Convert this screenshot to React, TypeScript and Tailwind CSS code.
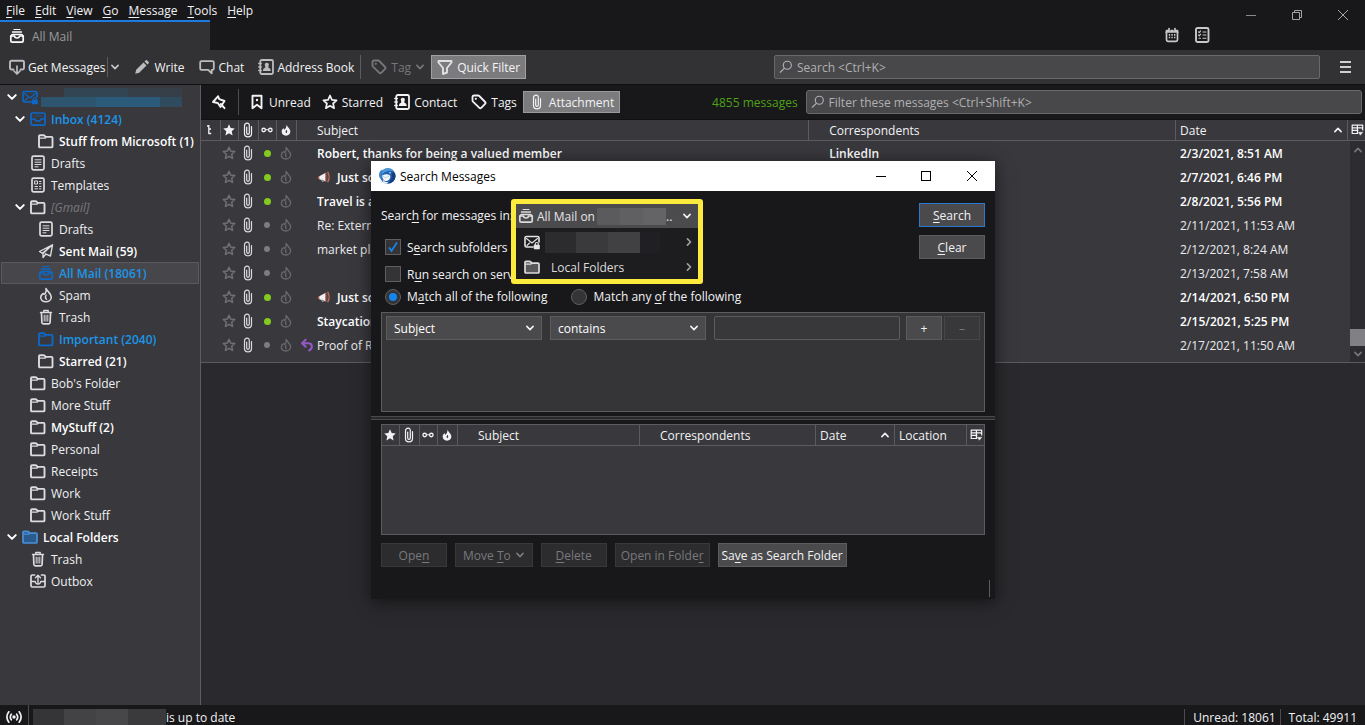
import React from "react";

type IconProps = { className?: string; size?: string };

function Svg({ className = "", children, size = "size-4" }: { className?: string; size?: string; children: React.ReactNode }) {
  return (
    <svg
      viewBox="0 0 16 16"
      fill="none"
      stroke="currentColor"
      strokeWidth="1.7"
      strokeLinecap="round"
      strokeLinejoin="round"
      aria-hidden="true"
      className={`${size} shrink-0 ${className}`}
    >
      {children}
    </svg>
  );
}

const Folder = ({ className }: IconProps) => (
  <Svg className={className}>
    <path d="M1 13.4V3.2q0-1 1-1h3.500q.6 0 1 .5l1 1.200h6q1 0 1 1v8.500q0 1-1 1H2q-1 0-1-1z" strokeWidth="1.900" />
    <path d="M2 5.200h5l1-1" strokeWidth="1.300" />
  </Svg>
);
const FilledFolder = ({ className, fill }: IconProps & { fill: string }) => (
  <Svg className={className}>
    <path d="M1 13V3.400q0-1 1-1h3.600q.6 0 1 .5l1 1.200H14q1 0 1 1V13q0 1-1 1H2q-1 0-1-1z" fill={fill} />
    <path d="M2 5.200h5l1-1" strokeWidth="1.200" />
  </Svg>
);
const Inbox = ({ className }: IconProps) => (
  <Svg className={className}>
    <rect x="1" y="2" width="14" height="12.200" rx="1.500" />
    <path d="M1.500 8H5q.4 2.200 3 2.200T11 8h3.500" strokeWidth="1.400" />
    <path d="M4 5h8" strokeWidth="1" opacity=".55" />
  </Svg>
);
const Account = ({ className, lock = "currentColor" }: IconProps & { lock?: string }) => (
  <Svg className={className}>
    <path d="M9 13H2.500q-1.500 0-1.500-1.500V4Q1 2.500 2.500 2.500h11Q15 2.500 15 4v4" strokeWidth="1.600" />
    <path d="M2.500 4.500 8 9l5.500-4.500M3 11.500l2.500-2.500" strokeWidth="1.100" />
    <rect x="10" y="11" width="5.600" height="4" rx=".6" fill={lock} stroke={lock} strokeWidth=".6" />
    <path d="M11.300 11v-1a1.500 1.500 0 0 1 3 0v1" strokeWidth="1.100" />
  </Svg>
);
const Doc = ({ className }: IconProps) => (
  <Svg className={className}>
    <rect x="2" y="1.200" width="12" height="13.600" rx="1.500" />
    <path d="M5 4.800h6M5 7.200h6M5 9.500h6M5 11.800h3" strokeWidth="1" />
  </Svg>
);
const Template = ({ className }: IconProps) => (
  <Svg className={className}>
    <rect x="2" y="1.200" width="12" height="13.600" rx="1.500" />
    <path d="M5 4h2.500v3H5zM9.500 4.500H11M9.500 6.700H11M5 9.500h2.500M5 11.800h2.500M9.500 9.500H11M9.500 11.800H11" strokeWidth="1" />
  </Svg>
);
const Sent = ({ className }: IconProps) => (
  <Svg className={className}>
    <path d="M14.500 1.800 1.500 8.500l3 1.800zM14.500 1.800 12.500 13l-5-2.200M14.500 1.800 5 10.500v4l2.500-3" strokeWidth="1.400" />
  </Svg>
);
const Archive = ({ className }: IconProps) => (
  <Svg className={className}>
    <path d="M5 1.500h6" strokeWidth="1.200" />
    <path d="M3.500 4h9" strokeWidth="1.300" />
    <path d="M1.800 8h3.700q.2 2 2.500 2t2.500-2h3.700v4.700q0 1.500-1.500 1.500H3.300q-1.500 0-1.500-1.500z" />
    <path d="m1.800 8 1.400-1.500h9.600L14.200 8" strokeWidth="1.400" />
  </Svg>
);
const Flame = ({ className, size }: IconProps) => (
  <Svg className={className} size={size}>
    <path
      d="M8 1.500q.8 2.800-.8 5-1 1.400-1.900 0Q2.700 8.300 2.700 10.300c0 2.600 2.200 4.500 5.200 4.500s5.400-2 5.400-4.800C13.300 6.800 9.800 5 8 1.500z"
      strokeWidth="1.600"
    />
    <path d="M8.500 12.200q-2-1.600-.4-4" strokeWidth="1.400" />
  </Svg>
);
const FlameSolid = ({ className, size }: IconProps) => (
  <Svg className={className} size={size}>
    <path
      fillRule="evenodd"
      d="M8.500.5c.5 3 5.300 5 5.300 9.500 0 3.200-2.400 5.500-5.800 5.500S2.200 13.200 2.200 10c0-2.200 1.300-3.800 2.700-4.800 0 1.200.2 2 .8 2.400C8 6 8.800 3.500 8.500.5zM9 7.500c-1.200 1.300-2.400 2.400-.6 4.700 1-.6 1.800-2 .6-4.700z"
      fill="currentColor"
      stroke="none"
    />
  </Svg>
);
const Trash = ({ className }: IconProps) => (
  <Svg className={className}>
    <path d="M2.500 3.500h11M5.800 3V1.500h4.400V3" strokeWidth="1.400" />
    <path d="m3.500 4.500.4 9q.1 1.300 1.400 1.300h5.400q1.300 0 1.400-1.300l.4-9" />
    <path d="M6.200 6.200v6M8 6.200v6M9.800 6.200v6" strokeWidth="1" />
  </Svg>
);
const Outbox = ({ className }: IconProps) => (
  <Svg className={className}>
    <path d="M4.500 2H2.300Q1 2 1 3.300v9.400Q1 14 2.300 14h11.400q1.300 0 1.300-1.300V3.300Q15 2 13.700 2h-2.200" />
    <path d="M8 9.500V2.500M5.500 4.800 8 2.300l2.500 2.500M1.500 8.500h3.700q.3 2.500 2.800 2.500t2.800-2.500h3.700" strokeWidth="1.400" />
  </Svg>
);
const Chevron = ({ className, size }: IconProps) => (
  <Svg className={className} size={size}>
    <path d="m3 5.500 5 5 5-5" strokeWidth="2.600" />
  </Svg>
);
const Star = ({ className, solid, size }: IconProps & { solid?: boolean }) => (
  <Svg className={className} size={size}>
    <path
      d="m8 1.500 1.900 4.300 4.700.5-3.500 3.200 1 4.700L8 11.800l-4.100 2.400 1-4.700L1.400 6.300l4.700-.5z"
      fill={solid ? "currentColor" : "none"}
      strokeWidth={solid ? "0" : "1.700"}
    />
  </Svg>
);
const Clip = ({ className }: IconProps) => (
  <Svg className={className}>
    <path d="M6.700 5v6q0 1.300 1.300 1.300T9.300 11V3.500Q9.300 1.200 7.300 1.200 4.500 1.200 4.500 4v7.500q0 3.300 3.500 3.300t3.500-3.300V4.500" strokeWidth="1.200" />
  </Svg>
);
const Glasses = ({ className }: IconProps) => (
  <Svg className={className} size="size-3.5">
    <circle cx="4.200" cy="8" r="2" strokeWidth="1.500" />
    <circle cx="11.800" cy="8" r="2" strokeWidth="1.500" />
    <path d="M6.500 7.800h3" strokeWidth="1.200" />
  </Svg>
);
const Thread = ({ className }: IconProps) => (
  <Svg className={className}>
    <path d="M5 4h2M6.800 3v8.500h2.400M7 7h2" strokeWidth="1.300" strokeLinecap="butt" />
  </Svg>
);
const Picker = ({ className }: IconProps) => (
  <Svg className={className} size="size-3.5">
    <path d="M8 12H2.500V2.500h12V8M3 5.500h11M3 8.500h6M8.500 2.500V12" strokeWidth="1.400" />
    <path d="M9.300 10.500h5.400L12 13.800z" fill="currentColor" strokeWidth=".4" />
  </Svg>
);
const Pin = ({ className }: IconProps) => (
  <Svg className={className}>
    <path d="M2 8 7.200 2.200l1 3L13.500 7l-4 6-2.700-4zM9.800 10l3.700 4.200" strokeWidth="1.900" />
  </Svg>
);
const Bookmark = ({ className }: IconProps) => (
  <Svg className={className}>
    <path d="M3.500 1.800h9v12.400L8 10.700l-4.500 3.500z" strokeWidth="1.900" />
    <circle cx="8" cy="6" r="1.200" fill="currentColor" stroke="none" />
  </Svg>
);
const Contact = ({ className }: IconProps) => (
  <Svg className={className}>
    <rect x="2.300" y="1" width="12.700" height="14" rx="1.500" strokeWidth="1.800" />
    <path d="M.8 4.500h2.400M.8 8h2.400M.8 11.500h2.400" strokeWidth="1.500" />
    <circle cx="8.800" cy="5.800" r="2.100" fill="currentColor" stroke="none" />
    <path d="M4.800 12q0-3 2.500-3.600V7h3v1.400q2.500.6 2.500 3.600z" fill="currentColor" stroke="none" />
  </Svg>
);
const Tag = ({ className }: IconProps) => (
  <Svg className={className}>
    <path d="M1.500 3q0-1.500 1.500-1.500h4q.8 0 1.300.5l5.800 6q.9.900 0 1.800l-3.900 4q-.9.900-1.800 0L2 7.700q-.5-.5-.5-1.200z" strokeWidth="1.800" />
    <circle cx="4.800" cy="4.800" r="1.100" fill="currentColor" stroke="none" />
  </Svg>
);
const GetMail = ({ className }: IconProps) => (
  <Svg className={className}>
    <path d="M4.500 10.500H2.500Q1 10.500 1 9V3.300Q1 1.800 2.500 1.800h11Q15 1.800 15 3.300V9q0 1.500-1.500 1.500h-2" strokeWidth="1.900" />
    <path d="M8 7v7.500M5 12l3 3 3-3" strokeWidth="1.700" />
  </Svg>
);
const Pencil = ({ className }: IconProps) => (
  <Svg className={className}>
    <path d="m1.200 14.800 1-4L9.500 3.500l3 3L5.200 13.800zM10.500 2.500l1.300-1.200q.6-.5 1.200 0l1.700 1.700q.6.600 0 1.300l-1.200 1.200z" fill="currentColor" stroke="none" />
  </Svg>
);
const ChatIcon = ({ className }: IconProps) => (
  <Svg className={className}>
    <path d="M2.500 2.200h11q1.300 0 1.300 1.300v6q0 1.300-1.300 1.300h-.8v3.500l-3.500-3.500H2.500q-1.300 0-1.300-1.300v-6q0-1.300 1.300-1.300z" strokeWidth="1.800" />
  </Svg>
);
const Funnel = ({ className }: IconProps) => (
  <Svg className={className}>
    <path d="M1.500 2h13v1.500L10 9v4.500L6 15V9L1.500 3.500z" strokeWidth="1.900" />
  </Svg>
);
const Lens = ({ className }: IconProps) => (
  <Svg className={className} size="size-3.5">
    <circle cx="9.500" cy="6" r="4.600" strokeWidth="1.300" />
    <path d="M6 9.500 1.500 14" strokeWidth="1.300" />
  </Svg>
);
const Calendar = ({ className }: IconProps) => (
  <Svg className={className}>
    <path d="M2.500 4.500v8.300q0 1.500 1.500 1.500h8q1.500 0 1.500-1.500V4.500M2 5h12M2.500 3.500h1M7 3.500h2M12.500 3.500h1M5 1.500V4M11 1.500V4" strokeWidth="1.700" />
    <path d="M4.800 7.800h1.400M7.400 7.800h1.400M10 7.800h1.400M4.800 10.500h1.400M7.400 10.500h1.400M10 10.500h1.400" strokeWidth="1.700" strokeLinecap="butt" />
  </Svg>
);
const Tasks = ({ className }: IconProps) => (
  <Svg className={className}>
    <rect x="2" y="1" width="12.500" height="14" rx="1.500" strokeWidth="1.900" />
    <path d="m4.500 4.800.8.800 1.300-1.700M4.500 8l.8.800 1.300-1.700M9 5h3M9 8h3M5 11.200h1.500M9 11.200h3" strokeWidth="1.100" />
  </Svg>
);
const Megaphone = ({ className }: IconProps) => (
  <svg viewBox="0 0 16 16" aria-hidden="true" className={`size-3.5 shrink-0 ${className ?? ""}`}>
    <path d="M2.500 7 10 3v10l-7.500-2.500z" fill="#f1f1f1" />
    <path d="M4.500 11 6 14l2-.6-1-2.300z" fill="#8a8a8a" />
    <path d="M10 3q2-1.500 2.600-1v12q-.8.500-2.600-1z" fill="#57474a" />
    <path d="M12.300 2q3.200 6 0 12" fill="none" stroke="#d0705c" strokeWidth="1.300" />
    <path d="M10 3v10" stroke="#d0604c" />
    <path d="M1 7.500h1.500v2.500H1z" fill="#d9573f" />
  </svg>
);
const Reply = ({ className }: IconProps) => (
  <Svg className={className} size="size-3.5">
    <path d="M6.500 2 2.300 6l4.200 4M3 6h6.500q4 0 4 3.800 0 3-3 4.400" strokeWidth="2.400" />
  </Svg>
);
const Signal = ({ className }: IconProps) => (
  <Svg className={className}>
    <circle cx="8" cy="8" r="1.700" fill="currentColor" stroke="none" />
    <path d="M5.300 5.200q-2 2.800 0 5.600M10.700 5.200q2 2.800 0 5.600M2.800 2.800Q-1 8 2.800 13.200M13.200 2.800Q17 8 13.200 13.200" strokeWidth="1.700" />
  </Svg>
);
const Bird = () => (
  <svg viewBox="0 0 18 18" aria-hidden="true" className="size-[18px] shrink-0">
    <circle cx="9.800" cy="9" r="7.700" fill="#2360ae" />
    <path d="M1 9Q.6 4 4.500 2.500L3.500 7l.3 5.500Q1.500 12 1 9z" fill="#3a86cf" />
    <path d="M5 3q3.500-3 8-1.200 2 .8 3 2.700Q12 3.200 9 4.300 6 5 3.800 8 3.500 5 5 3z" fill="#4a97dc" />
    <path d="M4 8.500q2.500-1.300 5-1.300l3 .8q.9 2-.4 4-1.800 2.200-4 2.300-3-1.200-3.600-5.800z" fill="#f4f8fc" />
    <path d="M4.500 12.500q2 3 6 2.800l-2 1.500Q5 16.300 4.500 12.500z" fill="#f4f8fc" />
    <path d="m4.300 8.700 3.700 2.300 3.800-2.800" fill="none" stroke="#a6bfdb" strokeWidth=".8" />
    <path d="M13.500 6q1.500 6-3.500 10.400 4.500-.4 6.500-3.700 1.700-3 .6-6.200Q15.500 4.500 13.500 6z" fill="#173f80" />
    <circle cx="12" cy="5.700" r=".7" fill="#fff" />
  </svg>
);

const Key = ({ children }: { children: string }) => <span className="underline underline-offset-2">{children}</span>;

const menus = ["File", "Edit", "View", "Go", "Message", "Tools", "Help"];

type FolderRow = {
  icon: React.ReactNode;
  name?: string;
  pad: string;
  open?: boolean;
  style?: string;
  selected?: boolean;
};

const PLAIN = "text-[#f0f0f2]";
const BOLD = "font-semibold text-white";
const BLUE = "font-semibold text-[#1d95e8]";
const ROOT = "pl-1";
const BRANCH = "pl-3";
const CHILD = "pl-[30px]";
const GRANDCHILD = "pl-[38px]";
const grey = "text-[#dcdcde]";
const blue = "text-[#0c68c8]";

const folders: FolderRow[] = [
  { icon: <Account className={blue} />, pad: ROOT, open: true },
  { icon: <Inbox className={blue} />, name: "Inbox (4124)", pad: BRANCH, open: true, style: BLUE },
  { icon: <Folder className={grey} />, name: "Stuff from Microsoft (1)", pad: GRANDCHILD, style: BOLD },
  { icon: <Doc className={grey} />, name: "Drafts", pad: CHILD, style: PLAIN },
  { icon: <Template className={grey} />, name: "Templates", pad: CHILD, style: PLAIN },
  { icon: <Folder className={grey} />, name: "[Gmail]", pad: BRANCH, open: true, style: "italic text-[#78787c]" },
  { icon: <Doc className={grey} />, name: "Drafts", pad: GRANDCHILD, style: PLAIN },
  { icon: <Sent className={grey} />, name: "Sent Mail (59)", pad: GRANDCHILD, style: BOLD },
  { icon: <Archive className={blue} />, name: "All Mail (18061)", pad: "pl-9", style: BLUE, selected: true },
  { icon: <Flame className={grey} />, name: "Spam", pad: GRANDCHILD, style: PLAIN },
  { icon: <Trash className={grey} />, name: "Trash", pad: GRANDCHILD, style: PLAIN },
  { icon: <Folder className={blue} />, name: "Important (2040)", pad: GRANDCHILD, style: BLUE },
  { icon: <Folder className={grey} />, name: "Starred (21)", pad: GRANDCHILD, style: BOLD },
  { icon: <Folder className={grey} />, name: "Bob's Folder", pad: CHILD, style: PLAIN },
  { icon: <Folder className={grey} />, name: "More Stuff", pad: CHILD, style: PLAIN },
  { icon: <Folder className={grey} />, name: "MyStuff (2)", pad: CHILD, style: BOLD },
  { icon: <Folder className={grey} />, name: "Personal", pad: CHILD, style: PLAIN },
  { icon: <Folder className={grey} />, name: "Receipts", pad: CHILD, style: PLAIN },
  { icon: <Folder className={grey} />, name: "Work", pad: CHILD, style: PLAIN },
  { icon: <Folder className={grey} />, name: "Work Stuff", pad: CHILD, style: PLAIN },
  { icon: <FilledFolder className="text-[#4a90d9]" fill="#2b5a8c" />, name: "Local Folders", pad: ROOT, open: true, style: BOLD },
  { icon: <Trash className={grey} />, name: "Trash", pad: CHILD, style: PLAIN },
  { icon: <Outbox className={grey} />, name: "Outbox", pad: CHILD, style: PLAIN },
];

const messages = [
  { subject: "Robert, thanks for being a valued member", from: "LinkedIn", date: "2/3/2021, 8:51 AM", unread: true },
  { subject: "Just so", date: "2/7/2021, 6:46 PM", unread: true, horn: true },
  { subject: "Travel is a", date: "2/8/2021, 5:56 PM", unread: true },
  { subject: "Re: Externa", date: "2/11/2021, 11:53 AM" },
  { subject: "market pla", date: "2/12/2021, 8:24 AM" },
  { subject: "", date: "2/13/2021, 7:58 AM" },
  { subject: "Just so", date: "2/14/2021, 6:50 PM", unread: true, horn: true },
  { subject: "Staycation", date: "2/15/2021, 5:25 PM", unread: true },
  { subject: "Proof of R", date: "2/17/2021, 11:50 AM", replied: true },
];

const th = "border-r border-[#5c5c60] p-0 font-normal";
const iconTh = "border-r border-[#5c5c60] p-0 pr-0.5 font-normal";
const iconTd = "p-0 pr-0.5";

function MessageList() {
  return (
    <div className="relative border-b border-[#5c5c60] bg-[#38383d] pb-[5px]">
      <table className="w-full table-fixed border-separate border-spacing-0">
        <thead>
          <tr className="h-[21px] text-left [&>th]:border-b">
            <th className={`${iconTh} w-5`} aria-label="Thread"><Thread className="mx-auto" /></th>
            <th className={`${iconTh} w-[18px]`} aria-label="Starred"><Star solid size="size-3.5" className="mx-auto" /></th>
            <th className={`${iconTh} w-5`} aria-label="Attachments"><Clip className="mx-auto" /></th>
            <th className={`${iconTh} w-[18px]`} aria-label="Read"><Glasses className="mx-auto" /></th>
            <th className={`${iconTh} w-5`} aria-label="Junk"><FlameSolid className="mx-auto" size="size-3" /></th>
            <th className={`${th} w-[44%] pl-5`}>Subject</th>
            <th className={`${th} pl-5`}>Correspondents</th>
            <th className={`${th} w-[172px] pl-1`}>
              <span className="flex items-center justify-between pr-1">Date<Chevron className="rotate-180" size="size-2.5" /></span>
            </th>
            <th className="w-[17px] border-[#5c5c60] p-0" aria-label="Columns"><Picker className="mx-auto" /></th>
          </tr>
        </thead>
        <tbody>
          {messages.map((m, i) => (
            <tr key={i} className={m.unread ? "h-6 font-semibold text-white" : "h-6 text-[#ececee]"}>
              <td className="p-0" />
              <td className={iconTd}><Star size="size-3.5" className="mx-auto text-[#6f6f74]" /></td>
              <td className={iconTd}><Clip className="mx-auto text-[#dcdcde]" /></td>
              <td className={iconTd}>
                <span className={m.unread ? "mx-auto block size-[7px] rounded-full bg-[#83cc1e]" : "mx-auto block size-[6px] rounded-full bg-[#7b7b80]"} />
              </td>
              <td className={iconTd}><Flame size="size-3.5" className="mx-auto text-[#66666b]" /></td>
              <td className="p-0">
                <span className="flex items-center whitespace-nowrap">
                  <span className="flex w-5 shrink-0 justify-center">{m.replied && <Reply className="text-[#9259c4]" />}</span>
                  {m.horn && <Megaphone className="mr-1.5" />}
                  {m.subject}
                </span>
              </td>
              <td className="p-0 pl-5">{m.from}</td>
              <td className="p-0 pl-1 whitespace-nowrap">{m.date}</td>
              <td className="p-0" />
            </tr>
          ))}
        </tbody>
      </table>
      <div className="absolute top-[21px] right-0 bottom-0 flex w-[15px] flex-col items-center bg-[#2d2d31]">
        <Chevron className="mt-1 rotate-180 text-[#77777b]" size="size-2.5" />
        <div className="mt-auto h-[17px] w-full bg-[#818185]" />
        <Chevron className="my-[3px] text-[#77777b]" size="size-2.5" />
      </div>
    </div>
  );
}

const field = "border border-[#5c5c5e] bg-[#4a4a4c]";

function DialogSelect({ label, options }: { label: string; options: string[] }) {
  return (
    <span className="relative flex w-[156px]">
      <select aria-label={label} className={`${field} h-6 w-full appearance-none px-[7px] text-white outline-none`}>
        {options.map((o) => (
          <option key={o}>{o}</option>
        ))}
      </select>
      <Chevron className="pointer-events-none absolute top-[7px] right-[7px]" size="size-2.5" />
    </span>
  );
}

function FolderPicker() {
  return (
    <div className="absolute top-[38px] left-[140px] w-48 rounded-[3px] border-[5px] border-[#fcea3c] bg-[#1d1d20]">
      <div className="relative flex h-6 items-center bg-[#4b4b4d]">
        <Archive className="pointer-events-none absolute left-0.5 text-[#dcdcde]" />
        <select id="search-folder" className="h-6 w-full appearance-none bg-transparent pl-[21px] text-[#e4e4e6] outline-none">
          <option>All Mail on</option>
        </select>
        <div className="pointer-events-none absolute left-[81px] flex h-[17px] w-[69px]">
          <span className="grow bg-[#5b5b5d]" />
          <span className="grow bg-[#606062]" />
          <span className="grow bg-[#646466]" />
        </div>
        <span className="pointer-events-none absolute left-[150px]">..</span>
        <Chevron className="pointer-events-none absolute right-1.5" size="size-2.5" />
      </div>
      <div role="menu" className="text-[#dcdcde]">
        <button type="button" role="menuitem" aria-label="Mail account" className="flex h-[27px] w-full items-center gap-[5px] pt-px pr-1 pl-2">
          <Account className="text-[#e4e4e6]" />
          <span className="flex h-[21px] grow">
            <span className="w-[31px] bg-[#2c2c2f]" />
            <span className="w-8 bg-[#3a3a3d]" />
            <span className="w-8 bg-[#414144]" />
            <span className="w-5 bg-[#202024]" />
          </span>
          <Chevron className="-rotate-90 text-[#a0a0a2]" size="size-2.5" />
        </button>
        <button type="button" role="menuitem" className="flex h-6 w-full items-center gap-[11px] pr-1 pl-2 text-left">
          <FilledFolder className="text-[#dcdcde]" fill="#58585b" />
          <span className="grow">Local Folders</span>
          <Chevron className="-rotate-90 text-[#a0a0a2]" size="size-2.5" />
        </button>
      </div>
    </div>
  );
}

const disabledButton = "flex h-6 min-w-[66px] items-center justify-center border border-[#38383a] bg-[#2c2c2e] text-[#79797c]";
const check = "flex size-4 shrink-0 appearance-none items-center justify-center border border-[#5f5f61] bg-[#343436]";

function SearchDialog() {
  return (
    <section
      role="dialog"
      aria-label="Search Messages"
      className="absolute top-[161px] left-[371px] flex h-[438px] w-[624px] flex-col bg-[#18181a] text-[#f2f2f4] shadow-[0_3px_16px_rgba(0,0,0,0.55)]"
    >
      <header className="flex h-[30px] items-center bg-white pl-[7px] text-black">
        <Bird />
        <h2 className="ml-1 grow">Search Messages</h2>
        <button type="button" aria-label="Minimize" className="flex w-[45px] justify-center"><span className="h-px w-2.5 bg-black" /></button>
        <button type="button" aria-label="Maximize" className="flex w-[46px] justify-center"><span className="size-2.5 border border-black" /></button>
        <button type="button" aria-label="Close" className="flex w-[46px] justify-center">
          <svg viewBox="0 0 10 10" className="size-2.5" stroke="black" aria-hidden="true"><path d="m0 0 10 10M10 0 0 10" /></svg>
        </button>
      </header>

      <div className="flex justify-between px-2.5 pt-3">
        <div>
          <label htmlFor="search-folder" className="flex h-6 items-center">Searc<Key>h</Key>&nbsp;for messages in:</label>
          <label className="ml-1 flex h-10 items-center gap-1.5">
            <span className="relative flex">
              <input type="checkbox" defaultChecked className={check} />
              <svg viewBox="0 0 16 16" className="pointer-events-none absolute inset-0 size-4" fill="none" stroke="#1583ea" strokeWidth="1.800" aria-hidden="true"><path d="m4 8.500 2.500 3.500L12 3.500" /></svg>
            </span>
            <span>S<Key>e</Key>arch subfolders</span>
          </label>
          <label className="ml-1 flex h-3.5 items-center gap-1.5">
            <input type="checkbox" className={check} />
            <span>R<Key>u</Key>n search on server</span>
          </label>
          <div className="ml-1 flex h-[31px] items-center gap-6">
            <label className="flex items-center gap-1.5">
              <input type="radio" name="match" defaultChecked className={`${check} rounded-full before:size-2 before:rounded-full before:bg-[#1286f0]`} />
              <span>M<Key>a</Key>tch all of the following</span>
            </label>
            <label className="flex items-center gap-1.5">
              <input type="radio" name="match" className={`${check} rounded-full`} />
              <span>Match any <Key>o</Key>f the following</span>
            </label>
          </div>
        </div>
        <div className="flex flex-col gap-2">
          <button type="button" className="h-6 w-[66px] border border-[#2a78d0] bg-[#4a4a4c]"><Key>S</Key>earch</button>
          <button type="button" className={`${field} h-6 w-[66px]`}><Key>C</Key>lear</button>
        </div>
      </div>

      <div className="mx-2.5 flex h-[100px] items-start border border-[#5c5c5e] bg-[#353537] px-1 pt-[3px]">
        <DialogSelect label="Search attribute" options={["Subject", "From", "Date"]} />
        <span className="w-2" />
        <DialogSelect label="Search operator" options={["contains", "is"]} />
        <input type="text" aria-label="Search value" className="mr-1.5 ml-2 h-6 min-w-0 grow rounded-[2px] border border-[#5c5c5e] bg-[#38383a] px-1 outline-none" />
        <button type="button" aria-label="Add rule" className={`${field} h-6 w-9`}>+</button>
        <button type="button" aria-label="Remove rule" disabled className="ml-0.5 h-6 w-9 border border-[#464648] bg-[#38383a] text-[#77777a]">–</button>
      </div>

      <div className="mt-1 h-1 border-y border-[#4a4a4c] bg-[#29292b]" />

      <div className="mx-2.5 mt-1 h-[111px] border border-[#5c5c60] bg-[#38383d]">
        <table className="w-full table-fixed border-separate border-spacing-0">
          <thead>
            <tr className="h-[21px] text-left [&>th]:border-b">
              <th className={`${iconTh} w-[18px]`} aria-label="Starred"><Star solid size="size-3.5" className="mx-auto" /></th>
              <th className={`${iconTh} w-5`} aria-label="Attachments"><Clip className="mx-auto" /></th>
              <th className={`${iconTh} w-[18px]`} aria-label="Read"><Glasses className="mx-auto" /></th>
              <th className={`${iconTh} w-5`} aria-label="Junk"><FlameSolid className="mx-auto" size="size-3" /></th>
              <th className={`${th} pl-5`}>Subject</th>
              <th className={`${th} w-[176px] pl-5`}>Correspondents</th>
              <th className={`${th} w-[79px] pl-1`}>
                <span className="flex items-center justify-between pr-1">Date<Chevron className="rotate-180" size="size-2.5" /></span>
              </th>
              <th className={`${th} w-[72px] pl-1`}>Location</th>
              <th className="w-[17px] border-[#5c5c60] p-0" aria-label="Columns"><Picker className="mx-auto" /></th>
            </tr>
          </thead>
        </table>
      </div>

      <div className="flex gap-2 px-2.5 pt-2">
        <button type="button" disabled className={disabledButton}>Ope<Key>n</Key></button>
        <button type="button" disabled className={`${disabledButton} gap-1 px-[7px]`}><span>Move <Key>T</Key>o</span><Chevron size="size-2.5" /></button>
        <button type="button" disabled className={disabledButton}><Key>D</Key>elete</button>
        <button type="button" disabled className={`${disabledButton} px-[5px]`}>Open in Folde<Key>r</Key></button>
        <button type="button" className={`${field} h-6 px-[3px]`}>Sa<Key>v</Key>e as Search Folder</button>
      </div>
      <div className="mt-auto mr-[5px] mb-0.5 h-[17px] border-r border-[#5c5c5e]" />

      <FolderPicker />
    </section>
  );
}

const tool = "flex h-6 items-center gap-1 whitespace-nowrap";

export default function App() {
  return (
    <div className="relative flex h-screen flex-col overflow-hidden bg-[#18181a] font-['Open_Sans','Noto_Sans',sans-serif] text-xs leading-[17px] text-[#f2f2f4]">
      <header className="flex h-[50px] shrink-0 justify-between">
        <div className="flex flex-col">
          <nav className="flex h-5 items-center gap-2.5 pl-1.5">
            {menus.map((name) => (
              <button key={name} type="button"><Key>{name[0]}</Key>{name.slice(1)}</button>
            ))}
          </nav>
          <button type="button" className="flex w-[210px] grow items-center gap-[7px] border-t-2 border-[#1c7be0] bg-[#323234] pl-[9px] text-[#9b9b9e]">
            <Archive className="text-white" />
            All Mail
          </button>
        </div>
        <div className="flex">
          <div className="mr-[18px] flex items-end gap-[14px] pb-[7px] text-[#c8c8ca]">
            <button type="button" aria-label="Calendar"><Calendar /></button>
            <button type="button" aria-label="Tasks"><Tasks /></button>
          </div>
          <div className="flex h-[30px] items-center text-[#a4a4a6]">
            <button type="button" aria-label="Minimize" className="flex w-[46px] justify-center"><span className="h-px w-2.5 bg-[#8a8a8c]" /></button>
            <button type="button" aria-label="Restore" className="flex w-[46px] justify-center">
              <svg viewBox="0 0 10 10" className="size-2.5" fill="none" stroke="currentColor" aria-hidden="true"><path d="M.5 2.500h7v7h-7zM2.500 2.500v-2h7v7h-2" /></svg>
            </button>
            <button type="button" aria-label="Close" className="flex w-[45px] justify-center">
              <svg viewBox="0 0 10 10" className="size-2.5" stroke="currentColor" aria-hidden="true"><path d="m0 0 10 10M10 0 0 10" /></svg>
            </button>
          </div>
        </div>
      </header>

      <div className="flex h-[35px] shrink-0 items-center border-b border-[#0f0f11] bg-[#323234]">
        <button type="button" className={`${tool} ml-[9px] gap-[3px]`}><GetMail className="text-[#bcbcbe]" />Get Messages</button>
        <span className="ml-0.5 h-5 border-l border-[#5c5c5e]" />
        <button type="button" aria-label="Get messages options" className="ml-0.5"><Chevron className="text-[#c8c8ca]" size="size-2.5" /></button>
        <button type="button" className={`${tool} ml-3.5`}><Pencil className="text-[#bcbcbe]" />Write</button>
        <button type="button" className={`${tool} ml-3.5`}><ChatIcon className="text-[#bcbcbe]" />Chat</button>
        <button type="button" className={`${tool} ml-3.5 gap-[3px]`}><Contact className="text-[#bcbcbe]" />Address Book</button>
        <span className="ml-1.5 h-6 border-l border-[#5c5c5e]" />
        <button type="button" disabled className={`${tool} ml-2.5 text-[#77777a]`}><Tag />Tag<Chevron size="size-2.5" /></button>
        <button type="button" className={`${tool} ml-1.5 border border-[#a0a0a2] bg-[#7b7b7d] px-[5px] text-[#f4f4f6]`}><Funnel className="text-[#e0e0e2]" />Quick Filter</button>
        <label className="mr-5 ml-auto flex h-6 w-[40%] items-center gap-1 rounded-[2px] border border-[#69696b] bg-[#48484a] px-1 text-[#b0b0b2]">
          <Lens />
          <input aria-label="Search" placeholder="Search <Ctrl+K>" className="min-w-0 grow bg-transparent outline-none placeholder:text-[#b0b0b2]" />
        </label>
        <button type="button" aria-label="Menu" className="mr-[14px] flex flex-col gap-[3px]">
          <span className="h-0.5 w-[11px] bg-[#d0d0d2]" />
          <span className="h-0.5 w-[11px] bg-[#d0d0d2]" />
          <span className="h-0.5 w-[11px] bg-[#d0d0d2]" />
        </button>
      </div>

      <div className="flex min-h-0 grow">
        <aside className="w-[201px] shrink-0 overflow-hidden border-r border-[#5e5e62] bg-[#38383d] pt-px">
          <ul>
            {folders.map((f, i) => (
              <li
                key={i}
                className={`flex h-[22px] items-center whitespace-nowrap ${f.pad} ${f.selected ? "mx-px border border-[#5a5a5e] bg-[#47474b]" : ""}`}
              >
                {f.open && <Chevron className="mr-0.5 p-[2px] text-white" />}
                {f.icon}
                {f.name ? (
                  <span className={`ml-[5px] ${f.style}`}>{f.name}</span>
                ) : (
                  <span className="ml-[3px] flex h-[19px] w-[141px] flex-col">
                    <span className="flex h-[9px] pl-[23px]">
                      <span className="w-16 bg-[#324552]" />
                      <span className="grow bg-[#363f48]" />
                    </span>
                    <span className="flex h-2.5">
                      <span className="w-[55px] bg-[#2d5570]" />
                      <span className="w-16 bg-[#2b5a7b]" />
                      <span className="grow bg-[#304b5e]" />
                    </span>
                  </span>
                )}
              </li>
            ))}
          </ul>
        </aside>

        <main className="flex min-w-0 grow flex-col bg-[#2a2a2e]">
          <div className="flex h-[35px] shrink-0 items-center border-b border-[#111113] bg-[#18181a]">
            <button type="button" aria-label="Keep filters applied" className="ml-2.5"><Pin /></button>
            <span className="ml-[11px] h-[26px] border-l border-[#4c4c4e]" />
            <button type="button" className={`${tool} ml-2.5`}><Bookmark />Unread</button>
            <button type="button" className={`${tool} ml-[11px]`}><Star />Starred</button>
            <button type="button" className={`${tool} ml-[11px]`}><Contact />Contact</button>
            <button type="button" className={`${tool} ml-3.5`}><Tag />Tags</button>
            <button type="button" className="ml-1.5 flex h-[22px] items-center gap-1 border border-[#9a9a9c] bg-[#7b7b7d] px-[5px]"><Clip />Attachment</button>
            <span className="mr-2 ml-auto whitespace-nowrap text-[#4fa016]">4855 messages</span>
            <label className="mr-[3px] flex h-6 w-[47.8%] items-center gap-1 rounded-[3px] border border-[#69696b] bg-[#48484a] px-1 text-[#b0b0b2]">
              <Lens />
              <input aria-label="Filter messages" placeholder="Filter these messages <Ctrl+Shift+K>" className="min-w-0 grow bg-transparent outline-none placeholder:text-[#b0b0b2]" />
            </label>
          </div>
          <MessageList />
        </main>
      </div>

      <footer className="flex h-5 shrink-0 items-center bg-[#18181a] pt-1">
        <span className="-mt-1 flex h-5 w-[29px] items-center justify-center border-r border-[#4c4c4e] pt-1"><Signal /></span>
        <span className="ml-1 flex h-4 w-[133px]">
          <span className="w-[31px] bg-[#353537]" />
          <span className="w-8 bg-[#434345]" />
          <span className="w-8 bg-[#474749]" />
          <span className="grow bg-[#3a3a3c]" />
        </span>
        <span className="grow">is up to date</span>
        <span className="border-l border-[#4c4c4e] pr-1 pl-2">Unread: 18061</span>
        <span className="border-l border-[#4c4c4e] pr-2 pl-2">Total: 49911</span>
      </footer>

      <SearchDialog />
    </div>
  );
}
